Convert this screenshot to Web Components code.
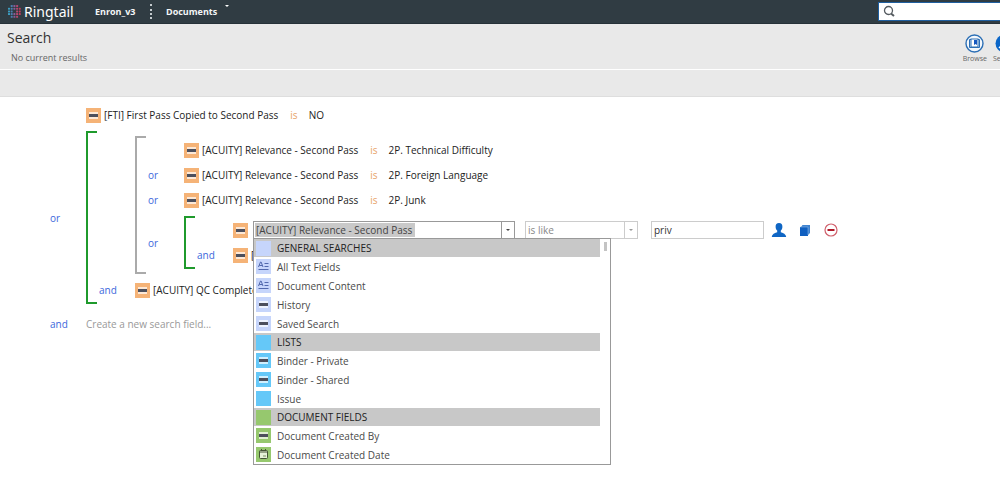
<!DOCTYPE html>
<html lang="en">
<head>
<meta charset="utf-8">
<title>Ringtail - Search</title>
<style>
  body { margin: 0; min-height: 100vh; background: #fff; font: 10px/16px "Open Sans", "Noto Sans", sans-serif; color: #222; }
</style>
</head>
<body>
<rt-header></rt-header>
<rt-titlebar></rt-titlebar>
<rt-query>
  <rt-condition field="[FTI] First Pass Copied to Second Pass" value="NO"></rt-condition>
  <rt-group joiner="or" tone="green">
    <rt-group tone="gray">
      <rt-condition field="[ACUITY] Relevance - Second Pass" value="2P. Technical Difficulty"></rt-condition>
      <rt-condition joiner="or" field="[ACUITY] Relevance - Second Pass" value="2P. Foreign Language"></rt-condition>
      <rt-condition joiner="or" field="[ACUITY] Relevance - Second Pass" value="2P. Junk"></rt-condition>
      <rt-group joiner="or" tone="green">
        <rt-editor></rt-editor>
        <rt-condition joiner="and" field="["></rt-condition>
      </rt-group>
    </rt-group>
    <rt-condition joiner="and" field="[ACUITY] QC Complete"></rt-condition>
  </rt-group>
  <rt-new joiner="and"></rt-new>
</rt-query>

<script>
class Base extends HTMLElement {
  connectedCallback() {
    if (this.shadowRoot) return;
    this.attachShadow({ mode: 'open' }).innerHTML =
      `<style>*{box-sizing:border-box} ${this.css()}</style>${this.html()}`;
  }
  attr(name) { return this.getAttribute(name) || ''; }
}

const rowCss = `
  :host { display: flex; align-items: center; height: 24px; white-space: nowrap; }
  .joiner { flex: none; width: 36px; color: #3c68dc; }
`;

/* Square badge that shows the kind of a field: none, bar, text or date */
customElements.define('rt-icon', class extends Base {
  css() {
    return `:host { display: block; flex: none; width: 15px; height: 15px; background: var(--tone, #f5b377); }
      svg { display: block; width: 15px; height: 15px; }`;
  }
  html() {
    const art = {
      bar: '<rect x="3" y="4" width="9" height="7" fill="#fff" opacity=".7"/><rect x="3" y="6" width="9" height="3" fill="#4c4f5c"/>',
      text: '<path d="M2.5 8 4.5 3h.6L7 8M3.3 6.5h3M8.500 4.500h4M8.500 7.500h4M2.500 10.500h10" fill="none" stroke="#5168ad"/>',
      date: '<rect x="3.500" y="3.500" width="8" height="8" rx="1" fill="#e6f2d8" stroke="#445335"/><path d="M3 5h9" stroke="#445335"/><path d="M5.500 2v2M9.500 2v2" stroke="#445335"/><path d="M7 9h3" stroke="#7c9465"/>'
    }[this.attr('kind')] || '';
    return `<svg viewBox="0 0 15 15" aria-hidden="true">${art}</svg>`;
  }
});

customElements.define('rt-header', class extends Base {
  css() {
    return `
      :host { display: flex; align-items: center; height: 23px; padding-left: 8px; background: #303c43; color: #f4f6f7; border-bottom: 1px solid #263138; }
      .brand { display: flex; align-items: center; gap: 2px; width: 87px; font: 14px/20px "Noto Sans", sans-serif; color: #fff; text-decoration: none; }
      nav { display: flex; align-items: center; font-weight: 700; font-size: 9px; }
      nav a, nav button { color: inherit; font: inherit; text-decoration: none; }
      nav a { width: 55px; }
      button { display: flex; gap: 8px; align-items: center; border: 0; padding: 0; background: none; }
      .dots { height: 15px; width: 16px; border-left: 2px dotted #c4cbcf; }
      .caret { margin-bottom: 11px; border: 2px solid transparent; border-top-color: #fff; border-bottom: 0; }
      label { display: flex; align-items: center; gap: 4px; margin-left: auto; width: 122px; height: 19px; padding-left: 4px; background: #fff; border: 1px solid #1f5fa0; border-right: 0; }
      input { flex: 1; min-width: 0; border: 0; padding: 0; outline: 0; font: inherit; background: none; }`;
  }
  html() {
    let dots = '';
    const hues = ['#3c9fc4', '#4c7fb0', '#8a5b96', '#b8486f', '#c23a5c'];
    for (let x = 0; x < 5; x++) for (let y = 0; y < 5; y++) {
      if ((x === 0 || x === 4) && (y === 0 || y === 4)) continue;
      if (x === 2 && y === 2) continue;
      dots += `<rect x="${x * 2.7}" y="${y * 2.7}" width="2" height="2" rx=".6" fill="${hues[x]}"/>`;
    }
    return `<a class="brand" href="#"><svg width="14" height="13" viewBox="0 0 14 13" aria-hidden="true">${dots}</svg>Ringtail</a>
      <nav><a href="#">Enron_v3</a><span class="dots"></span><button type="button">Documents<span class="caret"></span></button></nav>
      <label aria-label="Search documents"><svg width="13" height="13" viewBox="0 0 13 13" fill="none" stroke="#555b60" aria-hidden="true"><circle cx="5.500" cy="5.500" r="4" stroke-width="1.300"/><path d="M8 8.500l3 2.500" stroke-width="2"/></svg><input type="text"></label>`;
  }
});

customElements.define('rt-titlebar', class extends Base {
  css() {
    return `
      :host { display: block; background: #e9e9e9; overflow: hidden; border-bottom: 1px solid #dedede; }
      .top { display: flex; justify-content: space-between; height: 46px; border-bottom: 1px solid #fff; }
      .strip { height: 26px; }
      h1 { margin: 4px 0 0 7px; font-size: 14px; line-height: 20px; font-weight: 400; color: #333; }
      p { margin: 2px 0 0 11px; font-size: 9px; line-height: 16px; color: #666; }
      .tools { display: flex; gap: 5px; margin-right: -16px; padding-top: 10px; }
      button { display: flex; flex-direction: column; align-items: center; border: 0; padding: 0; background: none; color: #666; font: 7px/10px "Open Sans", sans-serif; min-width: 24px; }
      svg { display: block; margin-bottom: 1px; }`;
  }
  html() {
    return `<div class="top"><div><h1>Search</h1><p>No current results</p></div>
      <div class="tools">
        <button type="button"><svg width="19" height="19" viewBox="0 0 19 19" aria-hidden="true"><circle cx="9.500" cy="9.500" r="8.500" fill="#f4f8fc" stroke="#2c6fb5" stroke-width="1.400"/><path d="M4.500 5.500v8h10v-8z" fill="#cfe1f4" stroke="#2c6fb5"/><rect x="6" y="5" width="7" height="8" fill="#fff" stroke="#2c6fb5"/><path d="M9 6h3v5l-1.500-1L9 11z" fill="#1759c0"/></svg>Browse</button>
        <button type="button"><svg width="19" height="19" viewBox="0 0 19 19" aria-hidden="true"><circle cx="9.500" cy="9.500" r="9" fill="#0b66c8"/><circle cx="10" cy="8" r="3.500" fill="none" stroke="#fff" stroke-width="1.300"/><path d="M7.500 10.500 4 14" stroke="#fff" stroke-width="1.500"/></svg>Search</button>
      </div></div><div class="strip"></div>`;
  }
});

customElements.define('rt-query', class extends Base {
  css() { return `:host { display: flex; flex-direction: column; gap: 1px; padding: 6px 0 0 50px; }`; }
  html() { return `<slot></slot>`; }
});

customElements.define('rt-group', class extends Base {
  css() {
    return `
      :host { display: flex; align-items: center; margin: 3px 0; }
      :host([tone=green]) { --line: #1f9a2c; }
      :host([tone=gray]) { --line: #aaa; }
      .joiner { flex: none; width: 36px; color: #3c68dc; }
      .bracket { align-self: stretch; flex: none; width: 11px; margin-right: 2px; border: 2px solid var(--line); border-right: 0; }
      .items { flex: 1; display: flex; flex-direction: column; gap: 1px; padding: 2px 0; }`;
  }
  html() {
    return `<span class="joiner">${this.attr('joiner')}</span><span class="bracket"></span><div class="items"><slot></slot></div>`;
  }
});

customElements.define('rt-condition', class extends Base {
  css() {
    return rowCss + `
      .field { margin-left: 3px; }
      .op { margin: 0 11px 0 12px; color: #e8a468; }`;
  }
  html() {
    const value = this.attr('value');
    return `<span class="joiner">${this.attr('joiner')}</span><rt-icon kind="bar"></rt-icon><span class="field">${this.attr('field')}</span>` +
      (value ? `<span class="op">is</span><span>${value}</span>` : '');
  }
});

customElements.define('rt-new', class extends Base {
  css() {
    return rowCss + `
      :host { margin-top: 4px; }
      input { border: 0; padding: 0; outline: 0; width: 160px; font: inherit; background: none; }
      input::placeholder { color: #999; opacity: 1; }`;
  }
  html() {
    return `<span class="joiner">${this.attr('joiner')}</span><input type="text" aria-label="New search field" placeholder="Create a new search field...">`;
  }
});

customElements.define('rt-combo', class extends Base {
  css() {
    return `
      :host { position: relative; z-index: 2; display: block; flex: none; width: 262px; margin-left: 5px; }
      .box { display: flex; height: 18px; border: 1px solid #999; background: #fff; }
      .text { flex: 1; padding: 1px; }
      input { display: block; width: 160px; height: 14px; border: 0; padding: 0 1px; outline: 0; font: inherit; line-height: 14px; color: #444; background: #c9c9c9; }
      button { width: 13px; padding: 0; border: 0; border-left: 1px solid #999; background: #fff; display: grid; place-items: center; }
      button::after { content: ""; border: 2px solid transparent; border-top-color: #444; border-bottom: 0; }
      .menu { position: absolute; top: 17px; left: 0; width: 358px; display: flex; background: #fff; border: 1px solid #999; }
      ul { flex: 1; margin: 0; padding: 0; list-style: none; }
      li { display: flex; align-items: center; gap: 6px; height: 19px; padding-left: 2px; color: #4a4a4a; }
      li.head { height: 18px; background: #c8c8c8; color: #222; }
      .blue { --tone: #c6d5fb; } .sky { --tone: #65c8f8; } .green { --tone: #96c86e; }
      .bar { width: 10px; padding: 3px 3px 0 4px; }
      .bar::before { content: ""; display: block; height: 9px; background: #c4c4c4; }`;
  }
  html() {
    const items = [
      ['blue', '', 'GENERAL SEARCHES', 1], ['blue', 'text', 'All Text Fields'], ['blue', 'text', 'Document Content'],
      ['blue', 'bar', 'History'], ['blue', 'bar', 'Saved Search'],
      ['sky', '', 'LISTS', 1], ['sky', 'bar', 'Binder - Private'], ['sky', 'bar', 'Binder - Shared'], ['sky', '', 'Issue'],
      ['green', '', 'DOCUMENT FIELDS', 1], ['green', 'bar', 'Document Created By'], ['green', 'date', 'Document Created Date']
    ];
    return `<div class="box"><div class="text"><input type="text" aria-label="Field" value="[ACUITY] Relevance - Second Pass"></div><button type="button" aria-label="Show fields"></button></div>
      <div class="menu"><ul role="listbox" aria-label="Fields">${items.map(([tone, kind, text, head]) =>
        `<li role="option" class="${tone}${head ? ' head' : ''}"><rt-icon kind="${kind}"></rt-icon><span>${text}</span></li>`).join('')}</ul><div class="bar"></div></div>`;
  }
});

customElements.define('rt-editor', class extends Base {
  css() {
    return rowCss + `
      .select { display: flex; width: 113px; height: 18px; margin: 0 13px 0 10px; border: 1px solid #ccc; }
      select { flex: 1; min-width: 0; appearance: none; border: 0; padding: 0 2px; outline: 0; font: inherit; line-height: 16px; color: #888; background: #fff; }
      .arrow { width: 13px; border-left: 1px solid #ccc; display: grid; place-items: center; }
      .arrow::after { content: ""; border: 2px solid transparent; border-top-color: #999; border-bottom: 0; }
      .value { width: 113px; height: 18px; border: 1px solid #ccc; padding: 0 2px; outline: 0; font: inherit; line-height: 16px; color: #333; }
      .actions { display: flex; gap: 10px; margin-left: 7px; }
      .actions button { border: 0; padding: 0; width: 16px; height: 16px; background: none; }
      svg { display: block; }`;
  }
  html() {
    return `<span class="joiner"></span><rt-icon kind="bar"></rt-icon><rt-combo></rt-combo>
      <span class="select"><select aria-label="Operator"><option>is like</option></select><span class="arrow"></span></span>
      <input class="value" type="text" aria-label="Value" value="priv">
      <span class="actions">
        <button type="button" aria-label="People"><svg width="16" height="16" viewBox="0 0 16 16"><path d="M8 1c2.300 0 3.600 1.600 3.400 4-.1 1.700-.8 2.900-1.600 3.600v1.600c1.800.7 5 1.200 5.400 4.800H.8c.4-3.600 3.600-4.100 5.400-4.800V8.600C5.400 7.900 4.700 6.700 4.600 5 4.400 2.600 5.700 1 8 1z" fill="#0f66c4"/></svg></button>
        <button type="button" aria-label="Copy"><svg width="16" height="16" viewBox="0 0 16 16"><path d="M5.500 3H13v8l-2 2V5H4z" fill="#3f83d0"/><path d="M3 5h8v9H3z" fill="#0f5fc0"/><path d="M3 5h8v8" fill="none" stroke="#9cc2ea" stroke-width=".5"/></svg></button>
        <button type="button" aria-label="Remove"><svg width="16" height="16" viewBox="0 0 16 16"><circle cx="8" cy="8" r="6" fill="#fff" stroke="#d0606c" stroke-width="1.200"/><path d="M4.500 8h7" stroke="#b01828" stroke-width="2"/></svg></button>
      </span>`;
  }
});
</script>
</body>
</html>
